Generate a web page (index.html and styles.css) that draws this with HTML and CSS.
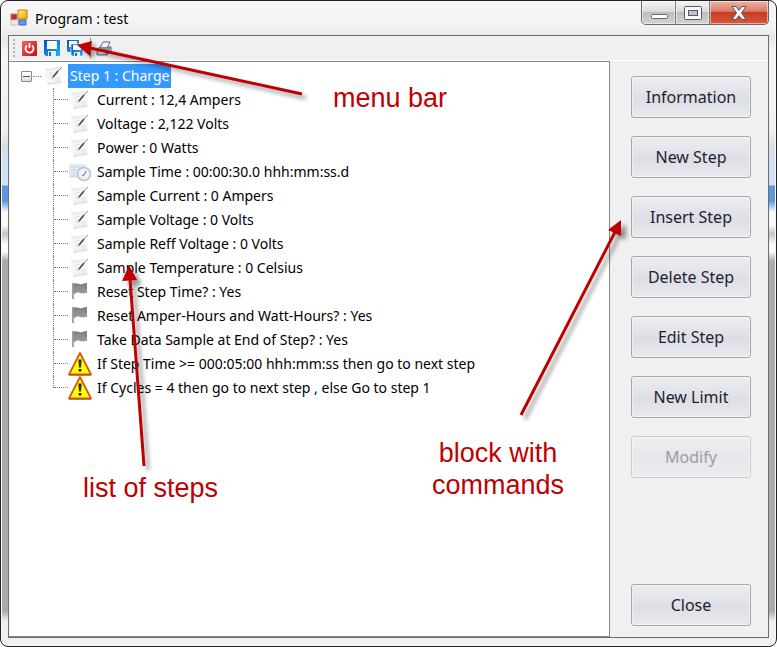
FILE: index.html
```html
<!DOCTYPE html>
<html lang="en">
<head>
<meta charset="utf-8">
<title>Program : test</title>
<link rel="stylesheet" href="styles.css">
</head>
<body>
<svg class="defs" aria-hidden="true">
  <defs>
    <linearGradient id="gBlue" x1="0" y1="0" x2="1" y2="1"><stop offset="0" stop-color="#0c48b8"/><stop offset="1" stop-color="#22b4ff"/></linearGradient>
    <linearGradient id="gRed" x1="0" y1="0" x2="1" y2="1"><stop offset="0" stop-color="#f0605c"/><stop offset="1" stop-color="#c80c10"/></linearGradient>
    <linearGradient id="gYellow" x1="0" y1="0" x2="1" y2="1"><stop offset="0" stop-color="#ffe77a"/><stop offset="1" stop-color="#f0a800"/></linearGradient>
    <linearGradient id="gFlag" x1="0" y1="0" x2="0" y2="1"><stop offset="0" stop-color="#7d7d7d"/><stop offset="1" stop-color="#a0a0a0"/></linearGradient>
    <filter id="soft" x="-20%" y="-20%" width="140%" height="140%"><feGaussianBlur stdDeviation="2"/></filter>
    <symbol id="note" viewBox="0 0 20 20">
      <path d="M1 3 15 2 17 17 3 19Z" fill="#f3f6f6"/>
      <path d="M3 18 17 16 18 18 4 20Z" fill="#e0e6e7"/>
      <path d="M1 3 4 5 14 3M5 8l5-1M5 10l4 1M5 13l6-1" fill="none" stroke="#e0e5e6"/>
      <path d="M11 13l5-1 1 4-6 1z" fill="#e6ebec"/>
      <path d="M18 2 13 7" stroke="#8a8a8a"/>
      <path d="M14 6 9 12" stroke="#444" stroke-width="1.500"/>
      <path d="M9 12l-1 2" stroke="#aaa"/>
    </symbol>
    <symbol id="clock" viewBox="0 0 24 20">
      <path d="M1 2h17v14H1z" fill="#e6edf2"/>
      <path d="M2 5h15M2 8h12M2 11h10M2 14h10M6 3v13M11 3v13" stroke="#cdd9e2"/>
      <circle cx="16" cy="12" r="6.500" fill="#edf3f8" stroke="#b4c5d2" stroke-width="1.500"/>
      <path d="M16 13l2-4M16 13l-2 1" stroke="#596d80"/>
    </symbol>
    <symbol id="flag" viewBox="0 0 20 20">
      <path d="M3 2v16" stroke="#a5a5a5" stroke-width="2"/>
      <path d="M3 3c4-2 6 1 9 0s3-1 5-1v10c-4 0-4 1-7 0s-4 0-7 2z" fill="url(#gFlag)"/>
    </symbol>
    <symbol id="warn" viewBox="0 0 24 24">
      <path d="M12 1 23 22.500H1z" fill="#ff0" stroke="#d8581c" stroke-width="1.800" stroke-linejoin="round"/>
      <path d="M1 23h22" stroke="#a85010"/>
      <path d="M10.300 7.500h3.400L13 15.500h-2z" fill="#333300"/>
      <path d="M10.500 17h3v2.500h-3z" fill="#333300"/>
    </symbol>
  </defs>
</svg>

<div class="window">
  <header class="titlebar">
    <svg class="app-icon" viewBox="0 0 18 18" aria-hidden="true">
      <path d="M1 5h6v6H1z" fill="#b8302a" stroke="#d87068"/>
      <path d="M1 11h7v5H1z" fill="#ececec" stroke="#c2c2c2"/>
      <path d="M8 1h9v9H8z" fill="url(#gYellow)" stroke="#b98612"/>
      <path d="M9 11h7v5H9z" fill="#5d9cf2" stroke="#3b68b8"/>
    </svg>
    <h1 class="title">Program : test</h1>
    <div class="window-controls">
      <button class="wc wc-min" aria-label="Minimize"><svg viewBox="0 0 18 16"><rect x="1.500" y="9.500" width="16" height="4" rx="1" fill="#fff" stroke="#666a78"/></svg></button>
      <button class="wc wc-max" aria-label="Maximize"><svg viewBox="0 0 18 16"><rect x=".5" y="1.500" width="17" height="13" rx="1" fill="#f8f8f8" stroke="#555968"/><rect x="4.500" y="5.500" width="9" height="5" fill="#bfc1c7" stroke="#555968"/></svg></button>
      <button class="wc wc-close" aria-label="Close window"><svg viewBox="0 0 18 16"><path d="M2 1.500h4l3 3.700 3-3.700h4L11.500 8l4.500 6.500h-4L9 10.800 6 14.500H2L6.500 8z" fill="#f4f4f4" stroke="#5a5366"/></svg></button>
    </div>
  </header>

  <main class="client">
    <div class="toolbar" role="toolbar" aria-label="Program">
      <span class="grip"></span>
      <button class="tool" aria-label="Exit"><svg viewBox="0 0 16 16"><rect x="1" y="1" width="15" height="15" rx="1" fill="url(#gRed)"/><path d="M6 5.500a4 4 0 1 0 5 0" fill="none" stroke="#fff" stroke-width="1.700"/><path d="M8.500 3v5" stroke="#fff" stroke-width="1.700"/></svg></button>
      <button class="tool" aria-label="Save"><svg viewBox="0 0 16 16"><path d="M0 0h16v16H2l-2-2z" fill="url(#gBlue)"/><path d="M3 1h10v8H3z" fill="#f4faff"/><path d="M4 11h8v5H4z" fill="#e3efff"/><path d="M5 12h2v4H5z" fill="#1470c8"/></svg></button>
      <button class="tool" aria-label="Save all"><svg viewBox="0 0 16 16"><path d="M0 0h12v12H1l-1-1z" fill="url(#gBlue)"/><path d="M2 1h8v6H2z" fill="#f4faff"/><path d="M4 4h12v12H5l-1-1z" fill="url(#gBlue)" stroke="#fff" stroke-width=".6"/><path d="M6 5h8v5H6z" fill="#f4faff"/><path d="M7 12h6v4H7z" fill="#e3efff"/><path d="M8 13h2v3H8z" fill="#1470c8"/></svg></button>
      <span class="divider"></span>
      <button class="tool" aria-label="Print"><svg viewBox="0 0 16 16"><path d="M4 8 7 2h7l-3 6z" fill="#f2f6fa" stroke="#5e6b80"/><path d="M1 9l3-2h1l-1 1h7l1-1h3v4l-4 4H1z" fill="#a9b5c6" stroke="#65738a"/><path d="M1 10h10v5M11 10l4-3" fill="none" stroke="#65738a"/><path d="M3 12.500h6" stroke="#eef3f8" stroke-width="2"/></svg></button>
    </div>

    <div class="content">
      <section class="tree" aria-label="Steps">
        <div class="row root">
          <button class="expander" aria-label="Collapse"></button>
          <span class="stub"></span>
          <svg class="icon"><use href="#note"/></svg>
          <span class="label selected">Step 1 : Charge</span>
        </div>
        <ul class="children">
          <li class="row"><svg class="icon"><use href="#note"/></svg><span class="label">Current : 12,4 Ampers</span></li>
          <li class="row"><svg class="icon"><use href="#note"/></svg><span class="label">Voltage : 2,122 Volts</span></li>
          <li class="row"><svg class="icon"><use href="#note"/></svg><span class="label">Power : 0 Watts</span></li>
          <li class="row"><svg class="icon wide"><use href="#clock"/></svg><span class="label">Sample Time : 00:00:30.0 hhh:mm:ss.d</span></li>
          <li class="row"><svg class="icon"><use href="#note"/></svg><span class="label">Sample Current : 0 Ampers</span></li>
          <li class="row"><svg class="icon"><use href="#note"/></svg><span class="label">Sample Voltage : 0 Volts</span></li>
          <li class="row"><svg class="icon"><use href="#note"/></svg><span class="label">Sample Reff Voltage : 0 Volts</span></li>
          <li class="row"><svg class="icon"><use href="#note"/></svg><span class="label">Sample Temperature : 0 Celsius</span></li>
          <li class="row"><svg class="icon"><use href="#flag"/></svg><span class="label">Reset Step Time? : Yes</span></li>
          <li class="row"><svg class="icon"><use href="#flag"/></svg><span class="label">Reset Amper-Hours and Watt-Hours? : Yes</span></li>
          <li class="row"><svg class="icon"><use href="#flag"/></svg><span class="label">Take Data Sample at End of Step? : Yes</span></li>
          <li class="row"><svg class="icon wide tall"><use href="#warn"/></svg><span class="label">If Step Time &gt;= 000:05:00 hhh:mm:ss then go to next step</span></li>
          <li class="row"><svg class="icon wide tall"><use href="#warn"/></svg><span class="label">If Cycles = 4 then go to next step , else Go to step 1</span></li>
        </ul>
      </section>

      <aside class="commands">
        <button class="command">Information</button>
        <button class="command">New Step</button>
        <button class="command">Insert Step</button>
        <button class="command">Delete Step</button>
        <button class="command">Edit Step</button>
        <button class="command">New Limit</button>
        <button class="command" disabled>Modify</button>
        <button class="command close">Close</button>
      </aside>
    </div>
  </main>
</div>

<div class="annotations">
  <svg class="arrows" viewBox="0 0 777 647" aria-hidden="true">
    <g class="shadow" filter="url(#soft)">
      <path d="M306 98 95 51M148 470 134 283M525 419 620 234"/>
      <path class="head" d="M82 50 95 43 93 59ZM134 270 127 286 142 285ZM626 224 613 234 626 240Z"/>
    </g>
    <g class="arrow">
      <path d="M302 94 90 48M144 466 130 279M521 415 616 230"/>
      <path class="head" d="M77 45 92 41 90 56ZM129 265 122 281 137 280ZM621 220 608 230 621 236Z"/>
    </g>
  </svg>
  <span class="note note-menu">menu bar</span>
  <span class="note note-list">list of steps</span>
  <span class="note note-block">block with<br>commands</span>
</div>
</body>
</html>
```

FILE: styles.css
```css
* { box-sizing: border-box; }

body {
  margin: 0;
  background: #fff;
  color: #000;
  font-family: "Noto Sans", "Open Sans", sans-serif;
  font-size: 14px;
}

button {
  margin: 0;
  padding: 0;
  font: inherit;
}

.defs {
  position: absolute;
  width: 0;
  height: 0;
}

/* Window frame */
.window {
  display: flex;
  flex-direction: column;
  min-height: 100vh;
  padding: 0 7px 8px;
  border: 1px solid #222;
  border-radius: 8px;
  box-shadow: inset 0 0 0 1px #f8f8f8;
  background: linear-gradient(#f7f7f7 0, #f3f3f3 25px, #e6e6e6 38px, #f5f5f5 50px, #f0f0f0 130px, #dcdcdc 145px, #cfe2f6 157px, #cfe2f6 184px, #5c98da 185px, #5c98da 200px, #fafafa 211px, #fafafa 224px, #c4c4c4 233px, #fafafa 243px, #fafafa 251px, #ababab 260px, #ababab 610px, #f0f0f0 620px);
}

.titlebar {
  display: flex;
  align-items: flex-start;
  height: 34px;
}

.app-icon {
  width: 18px;
  height: 18px;
  margin: 8px 7px 0 2px;
}

.title {
  flex: 1;
  margin: 8px 0 0;
  font-size: 14px;
  font-weight: 400;
  line-height: 20px;
}

.window-controls {
  display: flex;
  border: 1px solid #696969;
  border-top: 0;
  border-radius: 0 0 5px 5px;
  overflow: hidden;
}

.wc {
  display: flex;
  align-items: center;
  justify-content: center;
  width: 34px;
  height: 23px;
  border: 0;
  border-right: 1px solid #777;
  background: linear-gradient(#f4f4f4, #dcdcdc 45%, #bebebe 50%, #d2d2d2);
  box-shadow: inset 0 0 0 1px #ffffff80;
}

.wc svg { width: 18px; height: 16px; }

.wc-close {
  width: 58px;
  border-right: 0;
  background: linear-gradient(#eeb5a8, #dc7963 45%, #c53c22 50%, #d65a3c);
}

/* Client area */
.client {
  display: flex;
  flex: 1;
  flex-direction: column;
  border: 1px solid #6b6b70;
  background: #f0f0f0;
}

.toolbar {
  display: flex;
  align-items: center;
  height: 25px;
  padding-left: 4px;
  border-bottom: 1px solid #fff;
}

.grip {
  width: 2px;
  height: 18px;
  margin-right: 6px;
  background: repeating-linear-gradient(#b5b5b5 0 2px, transparent 2px 4px);
}

.tool {
  width: 16px;
  height: 16px;
  margin-right: 7px;
  border: 0;
  background: none;
}

.tool svg {
  display: block;
  width: 16px;
  height: 16px;
}

.divider {
  width: 1px;
  height: 20px;
  margin-right: 5px;
  background: #888;
}

.content {
  display: flex;
  flex: 1;
}

/* Step tree */
.tree {
  flex: 1;
  padding: 2px 0 0 12px;
  border: solid #828790;
  border-width: 1px 1px 1px 0;
  background: #fff;
}

.row {
  position: relative;
  display: flex;
  align-items: center;
  height: 24px;
}

.expander {
  width: 11px;
  height: 11px;
  border: 1px solid #8c8c8c;
  border-radius: 1px;
  background: linear-gradient(#3a56a0, #3a56a0) center / 7px 1px no-repeat, linear-gradient(#fff, #ddd);
}

.stub {
  width: 8px;
  margin: 0 3px 0 1px;
  border-top: 1px dotted #808080;
}

.icon {
  flex: none;
  width: 20px;
  height: 20px;
  margin: 0 4px 2px 2px;
}

.root .icon { margin: 0 4px 2px 0; }

.icon.wide {
  width: 24px;
  margin: 0 2px 0 0;
}

.icon.tall { height: 24px; }

.label {
  padding: 0 2px;
  line-height: 24px;
  white-space: nowrap;
}

.children .label { margin-left: 1px; }

.selected {
  background: #3399ff;
  color: #fff;
}

.children {
  margin: 0 0 0 32px;
  padding: 0;
  list-style: none;
}

.children .row { padding-left: 15px; }

.children .row::before {
  content: "";
  position: absolute;
  inset: 0 auto 0 0;
  border-left: 1px dotted #808080;
}

.children .row:last-child::before { bottom: 12px; }

.children .row::after {
  content: "";
  position: absolute;
  top: 11px;
  left: 1px;
  width: 14px;
  border-top: 1px dotted #808080;
}

/* Command buttons */
.commands {
  display: flex;
  flex-direction: column;
  gap: 18px;
  width: 158px;
  padding: 15px 17px 11px 21px;
}

.command {
  height: 42px;
  border: 1px solid #a5a7b2;
  border-radius: 3px;
  background: linear-gradient(#ecedf1, #dfe1e7 48%, #dcdee5 52%, #e9eaee);
  box-shadow: inset 0 0 0 1px #ffffff70;
  color: #1e1e32;
  font-size: 16px;
}

.command:disabled {
  border-color: #c9cbd2;
  background: linear-gradient(#efeff1, #e6e7eb 50%, #ececef);
  color: #9c9da6;
}

.close { margin-top: auto; }

/* Callouts drawn over the window */
.annotations {
  position: absolute;
  top: 0;
  left: 0;
  color: #c00000;
  font-family: "Liberation Sans", Arial, sans-serif;
  font-size: 27px;
  line-height: 32px;
  pointer-events: none;
}

.arrows {
  display: block;
  width: 777px;
  height: 647px;
}

.arrows path { fill: none; stroke-width: 3; }
.arrow path { stroke: #c00000; }
.arrows .arrow .head { fill: #c00000; stroke: none; }
.shadow { opacity: 0.4; }
.shadow path { stroke: #000; }
.arrows .shadow .head { fill: #000; stroke: none; }

.note {
  position: absolute;
  text-align: center;
  white-space: nowrap;
}

.note-menu { top: 82px; left: 333px; }
.note-list { top: 472px; left: 83px; }
.note-block { top: 437px; left: 432px; }
```
